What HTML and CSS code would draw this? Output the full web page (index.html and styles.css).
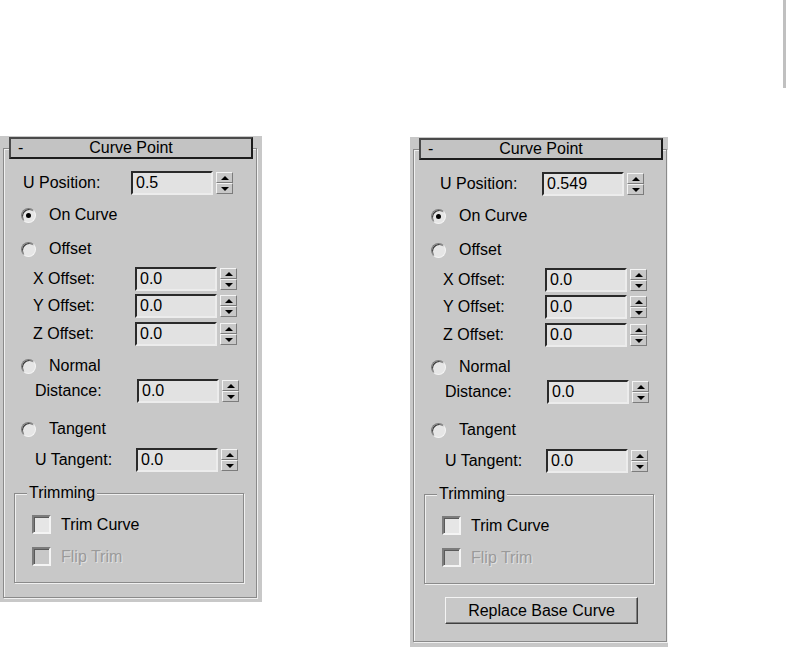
FILE: index.html
```html
<!DOCTYPE html>
<html>
<head>
<meta charset="utf-8">
<link rel="stylesheet" href="styles.css">
</head>
<body>
<div class="page">
  <div class="topstrip"><div class="sliver"></div></div>
  <div class="panels">
    <section class="panel panel-a">
      <div class="groove">
        <div class="rollout-head"><span class="minus">-</span><span class="title">Curve Point</span><span></span></div>
        <div class="row spin-row r-upos"><span class="lbl lbl-upos">U Position:</span><span class="field">0.5</span><span class="spin"><i class="up"></i><i class="down"></i></span></div>
        <div class="row radio-row r-oncurve"><span class="radio checked"></span><span>On Curve</span></div>
        <div class="row radio-row r-offset"><span class="radio"></span><span>Offset</span></div>
        <div class="row spin-row r-x"><span class="lbl lbl-off">X Offset:</span><span class="field">0.0</span><span class="spin"><i class="up"></i><i class="down"></i></span></div>
        <div class="row spin-row r-y"><span class="lbl lbl-off">Y Offset:</span><span class="field">0.0</span><span class="spin"><i class="up"></i><i class="down"></i></span></div>
        <div class="row spin-row r-z"><span class="lbl lbl-off">Z Offset:</span><span class="field">0.0</span><span class="spin"><i class="up"></i><i class="down"></i></span></div>
        <div class="row radio-row r-normal"><span class="radio"></span><span>Normal</span></div>
        <div class="row spin-row r-dist"><span class="lbl lbl-dist">Distance:</span><span class="field">0.0</span><span class="spin"><i class="up"></i><i class="down"></i></span></div>
        <div class="row radio-row r-tangent"><span class="radio"></span><span>Tangent</span></div>
        <div class="row spin-row r-utan"><span class="lbl lbl-utan">U Tangent:</span><span class="field">0.0</span><span class="spin"><i class="up"></i><i class="down"></i></span></div>
        <div class="group">
          <span class="group-label">Trimming</span>
          <div class="check-row c-first"><span class="check"></span><span>Trim Curve</span></div>
          <div class="check-row c-second disabled"><span class="check"></span><span>Flip Trim</span></div>
        </div>
      </div>
    </section>
    <section class="panel panel-b">
      <div class="groove">
        <div class="rollout-head"><span class="minus">-</span><span class="title">Curve Point</span><span></span></div>
        <div class="row spin-row r-upos"><span class="lbl lbl-upos-b">U Position:</span><span class="field">0.549</span><span class="spin"><i class="up"></i><i class="down"></i></span></div>
        <div class="row radio-row r-oncurve"><span class="radio checked"></span><span>On Curve</span></div>
        <div class="row radio-row r-offset"><span class="radio"></span><span>Offset</span></div>
        <div class="row spin-row r-x"><span class="lbl lbl-off">X Offset:</span><span class="field">0.0</span><span class="spin"><i class="up"></i><i class="down"></i></span></div>
        <div class="row spin-row r-y"><span class="lbl lbl-off">Y Offset:</span><span class="field">0.0</span><span class="spin"><i class="up"></i><i class="down"></i></span></div>
        <div class="row spin-row r-z"><span class="lbl lbl-off">Z Offset:</span><span class="field">0.0</span><span class="spin"><i class="up"></i><i class="down"></i></span></div>
        <div class="row radio-row r-normal"><span class="radio"></span><span>Normal</span></div>
        <div class="row spin-row r-dist"><span class="lbl lbl-dist">Distance:</span><span class="field">0.0</span><span class="spin"><i class="up"></i><i class="down"></i></span></div>
        <div class="row radio-row r-tangent"><span class="radio"></span><span>Tangent</span></div>
        <div class="row spin-row r-utan"><span class="lbl lbl-utan">U Tangent:</span><span class="field">0.0</span><span class="spin"><i class="up"></i><i class="down"></i></span></div>
        <div class="group">
          <span class="group-label">Trimming</span>
          <div class="check-row c-first"><span class="check"></span><span>Trim Curve</span></div>
          <div class="check-row c-second disabled"><span class="check"></span><span>Flip Trim</span></div>
        </div>
        <div class="btn">Replace Base Curve</div>
      </div>
    </section>
  </div>
</div>
</body>
</html>
```
FILE: styles.css
```css
html, body {
  margin: 0;
  padding: 0;
  background: #ffffff;
  overflow: hidden;
}
body {
  font-family: "Liberation Sans", Arial, sans-serif;
  font-size: 16px;
  color: #000;
}
.page {
  width: 786px;
  height: 647px;
  overflow: hidden;
}
.topstrip {
  height: 136px;
  display: flex;
  justify-content: flex-end;
}
.sliver {
  width: 3px;
  height: 88px;
  background: #c0c0c0;
}
.panels {
  display: flex;
  align-items: flex-start;
  gap: 148px;
}
.panel {
  background: #c8c8c8;
  box-sizing: border-box;
  padding: 12px 5px 4px 3px;
  width: 262px;
}
.panel-b {
  width: 258px;
  padding: 12px 1px 10px 3px;
  margin-top: 1px;
}
.groove {
  box-sizing: border-box;
  width: 254px;
  border: 1px solid #8a8a8a;
  box-shadow: 1px 1px 0 #f0f0f0, inset 1px 1px 0 #f0f0f0;
  padding-bottom: 14px;
}
.panel-b .groove {
  padding-bottom: 17px;
}
.rollout-head {
  box-sizing: border-box;
  margin: -12px 0 0 5px;
  width: 244px;
  height: 22px;
  border: 2px solid;
  border-color: #4a4a4a #1c1c1c #1c1c1c #4a4a4a;
  background: #c3c3c3;
  display: grid;
  grid-template-columns: 20px 1fr 20px;
  align-items: center;
  line-height: 18px;
}
.minus {
  padding-left: 7px;
}
.title {
  text-align: center;
}
.row {
  display: flex;
  align-items: center;
}
.spin-row {
  height: 24px;
}
.radio-row {
  height: 20px;
  padding-left: 17px;
  gap: 13px;
}
.r-upos { margin-top: 12px; }
.r-oncurve { margin-top: 10px; }
.r-offset { margin-top: 14px; }
.r-x { margin-top: 8px; }
.r-y { margin-top: 3px; }
.r-z { margin-top: 4px; }
.r-normal { margin-top: 10px; }
.r-dist { margin-top: 3px; }
.r-tangent { margin-top: 16px; }
.r-utan { margin-top: 9px; }
.lbl { flex: none; white-space: nowrap; }
.lbl-upos { margin-left: 19px; width: 108px; }
.lbl-upos-b { margin-left: 26px; width: 102px; }
.lbl-off { margin-left: 29px; width: 102px; }
.lbl-dist { margin-left: 31px; width: 102px; }
.lbl-utan { margin-left: 31px; width: 101px; }
.field {
  box-sizing: border-box;
  width: 82px;
  height: 24px;
  border: 2px solid;
  border-color: #2a2a2a #ececec #ececec #2a2a2a;
  background: #e2e2e2;
  padding-left: 3px;
  line-height: 20px;
}
.spin {
  display: flex;
  flex-direction: column;
  width: 17px;
  height: 22px;
  margin-left: 3px;
}
.spin i {
  flex: 1;
  box-sizing: border-box;
  border: 1px solid;
  border-color: #f4f4f4 #7c7c7c #7c7c7c #f4f4f4;
  background: #c8c8c8;
  display: flex;
  align-items: center;
  justify-content: center;
}
.spin .up::before {
  content: "";
  width: 0;
  height: 0;
  border-left: 4px solid transparent;
  border-right: 4px solid transparent;
  border-bottom: 4px solid #000;
}
.spin .down::before {
  content: "";
  width: 0;
  height: 0;
  border-left: 4px solid transparent;
  border-right: 4px solid transparent;
  border-top: 4px solid #000;
}
.radio {
  box-sizing: border-box;
  width: 15px;
  height: 15px;
  border-radius: 50%;
  border: 1px solid;
  border-color: #7c7c7c #f4f4f4 #f4f4f4 #7c7c7c;
  background: #e6e6e6;
  box-shadow: inset 1px 1px 0 #3c3c3c;
  display: flex;
  align-items: center;
  justify-content: center;
}
.radio.checked::after {
  content: "";
  width: 5px;
  height: 5px;
  border-radius: 50%;
  background: #000;
}
.group {
  box-sizing: border-box;
  margin: 21px 0 0 10px;
  width: 230px;
  border: 1px solid #8a8a8a;
  box-shadow: 1px 1px 0 #f0f0f0, inset 1px 1px 0 #f0f0f0;
  padding-bottom: 16px;
}
.group-label {
  display: block;
  width: fit-content;
  margin: -10px 0 0 12px;
  padding: 0 2px;
  background: #c8c8c8;
  line-height: 18px;
}
.check-row {
  display: flex;
  align-items: center;
  height: 19px;
  padding-left: 17px;
  gap: 10px;
}
.c-first { margin-top: 13px; }
.c-second { margin-top: 13px; }
.check {
  box-sizing: border-box;
  width: 19px;
  height: 19px;
  border: 2px solid;
  border-color: #7c7c7c #f4f4f4 #f4f4f4 #7c7c7c;
  background: #e6e6e6;
  box-shadow: inset 1px 1px 0 #5a5a5a;
}
.disabled .check {
  background: #c8c8c8;
}
.disabled span:last-child {
  color: #9a9a9a;
  text-shadow: 1px 1px 0 #e2e2e2;
}
.btn {
  box-sizing: border-box;
  margin: 13px 0 0 31px;
  width: 193px;
  height: 27px;
  border: 1px solid;
  border-color: #f4f4f4 #404040 #404040 #f4f4f4;
  box-shadow: inset -1px -1px 0 #808080;
  background: #c8c8c8;
  display: flex;
  align-items: center;
  justify-content: center;
}
```
